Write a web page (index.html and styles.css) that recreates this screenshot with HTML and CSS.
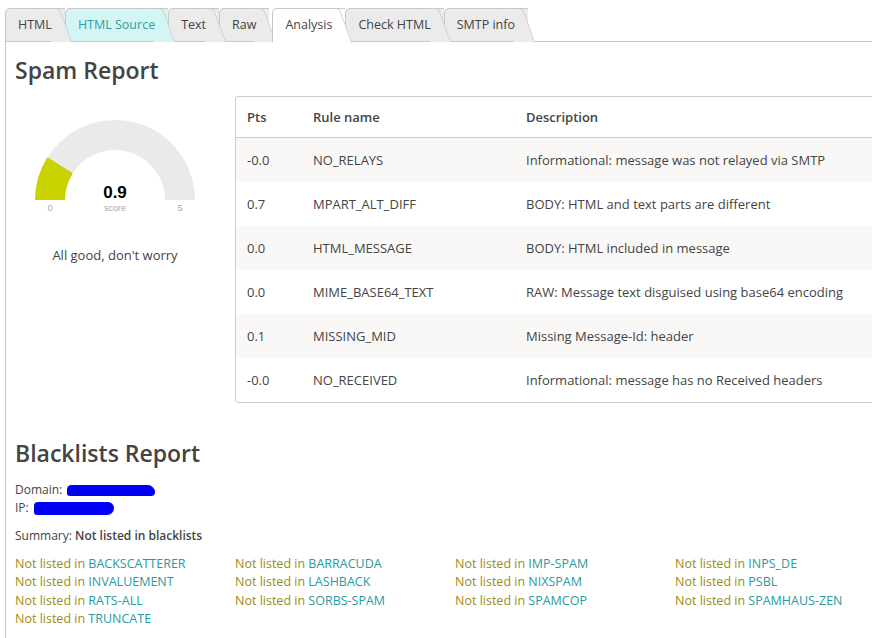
FILE: index.html
```html
<!DOCTYPE html>
<html>
<head>
  <title>Analysis</title>
  <link rel="stylesheet" href="styles.css">
</head>
<body>
  <div class="tabs">
    <div class="tab">HTML</div>
    <div class="tab tab-source">HTML Source</div>
    <div class="tab">Text</div>
    <div class="tab">Raw</div>
    <div class="tab active">Analysis</div>
    <div class="tab">Check HTML</div>
    <div class="tab">SMTP info</div>
  </div>

  <div class="panel">
    <h2>Spam Report</h2>

    <div class="spam-row">
      <div class="score-col">
        <svg class="gauge" width="160" height="96" viewBox="0 0 160 96">
          <path d="M0,80 A80,80 0 0 1 160,80 L130,80 A50,50 0 0 0 30,80 Z" fill="#ebeaeb"/>
          <path d="M0,80 A80,80 0 0 1 12.45,37.13 L37.78,53.21 A50,50 0 0 0 30,80 Z" fill="#c8d300"/>
          <text x="80" y="78" class="gauge-value">0.9</text>
          <text x="80" y="91" class="gauge-small">score</text>
          <text x="15" y="91" class="gauge-small">0</text>
          <text x="145" y="91" class="gauge-small">5</text>
        </svg>
        <p class="verdict">All good, don't worry</p>
      </div>

      <div class="rules">
        <table>
          <thead>
            <tr><th class="pts">Pts</th><th class="rule">Rule name</th><th>Description</th></tr>
          </thead>
          <tbody>
            <tr><td>-0.0</td><td>NO_RELAYS</td><td>Informational: message was not relayed via SMTP</td></tr>
            <tr><td>0.7</td><td>MPART_ALT_DIFF</td><td>BODY: HTML and text parts are different</td></tr>
            <tr><td>0.0</td><td>HTML_MESSAGE</td><td>BODY: HTML included in message</td></tr>
            <tr><td>0.0</td><td>MIME_BASE64_TEXT</td><td>RAW: Message text disguised using base64 encoding</td></tr>
            <tr><td>0.1</td><td>MISSING_MID</td><td>Missing Message-Id: header</td></tr>
            <tr><td>-0.0</td><td>NO_RECEIVED</td><td>Informational: message has no Received headers</td></tr>
          </tbody>
        </table>
      </div>
    </div>

    <h2 class="bl-title">Blacklists Report</h2>
    <div class="info">Domain: <span class="redact redact-domain"></span></div>
    <div class="info">IP: <span class="redact redact-ip"></span></div>
    <p class="summary">Summary: <b>Not listed in blacklists</b></p>

    <div class="bl-grid">
      <div>Not listed in <span class="bl-name">BACKSCATTERER</span></div>
      <div>Not listed in <span class="bl-name">BARRACUDA</span></div>
      <div>Not listed in <span class="bl-name">IMP-SPAM</span></div>
      <div>Not listed in <span class="bl-name">INPS_DE</span></div>
      <div>Not listed in <span class="bl-name">INVALUEMENT</span></div>
      <div>Not listed in <span class="bl-name">LASHBACK</span></div>
      <div>Not listed in <span class="bl-name">NIXSPAM</span></div>
      <div>Not listed in <span class="bl-name">PSBL</span></div>
      <div>Not listed in <span class="bl-name">RATS-ALL</span></div>
      <div>Not listed in <span class="bl-name">SORBS-SPAM</span></div>
      <div>Not listed in <span class="bl-name">SPAMCOP</span></div>
      <div>Not listed in <span class="bl-name">SPAMHAUS-ZEN</span></div>
      <div>Not listed in <span class="bl-name">TRUNCATE</span></div>
    </div>
  </div>
</body>
</html>
```

FILE: styles.css
```css
body {
  margin: 0;
  font-family: 'Open Sans', sans-serif;
  font-size: 12px;
  color: #444;
  background: #fff;
  overflow: hidden;
}

.tabs {
  display: flex;
  align-items: flex-start;
  padding: 8px 0 0 5px;
}

.tab {
  position: relative;
  height: 33px;
  line-height: 32px;
  padding: 0 13px 0 12px;
  font-size: 12.5px;
  background: #ebebeb;
  border: 1px solid #c8c8c8;
  border-right: none;
  border-bottom: none;
  border-radius: 5px 0 0 0;
  box-sizing: border-box;
}

.tab::after {
  content: "";
  position: absolute;
  top: -1px;
  right: -1px;
  width: 20px;
  height: 33px;
  background: inherit;
  border-top: 1px solid #c8c8c8;
  border-right: 1px solid #c8c8c8;
  border-radius: 0 5px 0 0;
  transform: skewX(20deg);
  z-index: -1;
}

.tab:nth-child(1) { z-index: 7; }
.tab:nth-child(2) { z-index: 6; }
.tab:nth-child(3) { z-index: 5; }
.tab:nth-child(4) { z-index: 4; }
.tab:nth-child(5) { z-index: 8; }
.tab:nth-child(6) { z-index: 2; }
.tab:nth-child(7) { z-index: 1; }

.tab-source {
  background: #d5f5f5;
  color: #2a9fa6;
}

.tab.active {
  background: #fff;
  margin-left: 3px;
  height: 34px;
  margin-bottom: -1px;
}

.tab.active::after {
  height: 34px;
}

.panel {
  border-top: 1px solid #c8c8c8;
  border-left: 1px solid #c8c8c8;
  margin-left: 5px;
  padding: 0 0 40px 9px;
}

h2 {
  margin: 12px 0 0;
  font-size: 23px;
  font-weight: 600;
  color: #444;
  line-height: 32px;
}

.spam-row {
  display: flex;
  gap: 20px;
  margin-top: 10px;
}

.score-col {
  width: 200px;
  flex: none;
  text-align: center;
  padding-top: 24px;
}

.gauge {
  display: block;
  margin: 0 auto;
}

.gauge text {
  text-anchor: middle;
  font-family: 'Liberation Sans', sans-serif;
}

.gauge-value {
  font-size: 17px;
  font-weight: bold;
  fill: #000;
}

.gauge-small {
  font-size: 9px;
  fill: #aaa;
}

.verdict {
  margin: 30px 0 0;
  font-size: 13px;
}

.rules {
  width: 660px;
  flex: none;
  border: 1px solid #ccc;
  border-radius: 3px;
}

table {
  width: 100%;
  border-collapse: collapse;
  font-size: 13px;
}

th {
  text-align: left;
  font-weight: 600;
  height: 40px;
  padding: 0 11px;
  border-bottom: 1px solid #ccc;
}

th.pts {
  width: 44px;
}

th.rule {
  width: 191px;
}

td {
  height: 44px;
  padding: 0 11px;
}

tbody tr:nth-child(odd) {
  background: #f9f8f7;
}

.bl-title {
  margin: 34px 0 12px;
}

.info {
  line-height: 18px;
}

.redact {
  display: inline-block;
  background: #0000f5;
  vertical-align: middle;
}

.redact-domain {
  width: 88px;
  height: 11px;
  margin-left: 2px;
  border-radius: 5px 8px 4px 3px;
}

.redact-ip {
  width: 80px;
  height: 13px;
  margin-left: 2px;
  border-radius: 4px 6px 7px 3px;
}

.summary {
  margin: 10px 0 0;
}

.summary b {
  font-weight: 600;
}

.bl-grid {
  display: grid;
  grid-template-columns: repeat(4, 220px);
  margin-top: 11px;
  font-size: 12.5px;
  line-height: 18.3px;
  color: #9c8c14;
}

.bl-name {
  color: #2a9aa0;
}
```
